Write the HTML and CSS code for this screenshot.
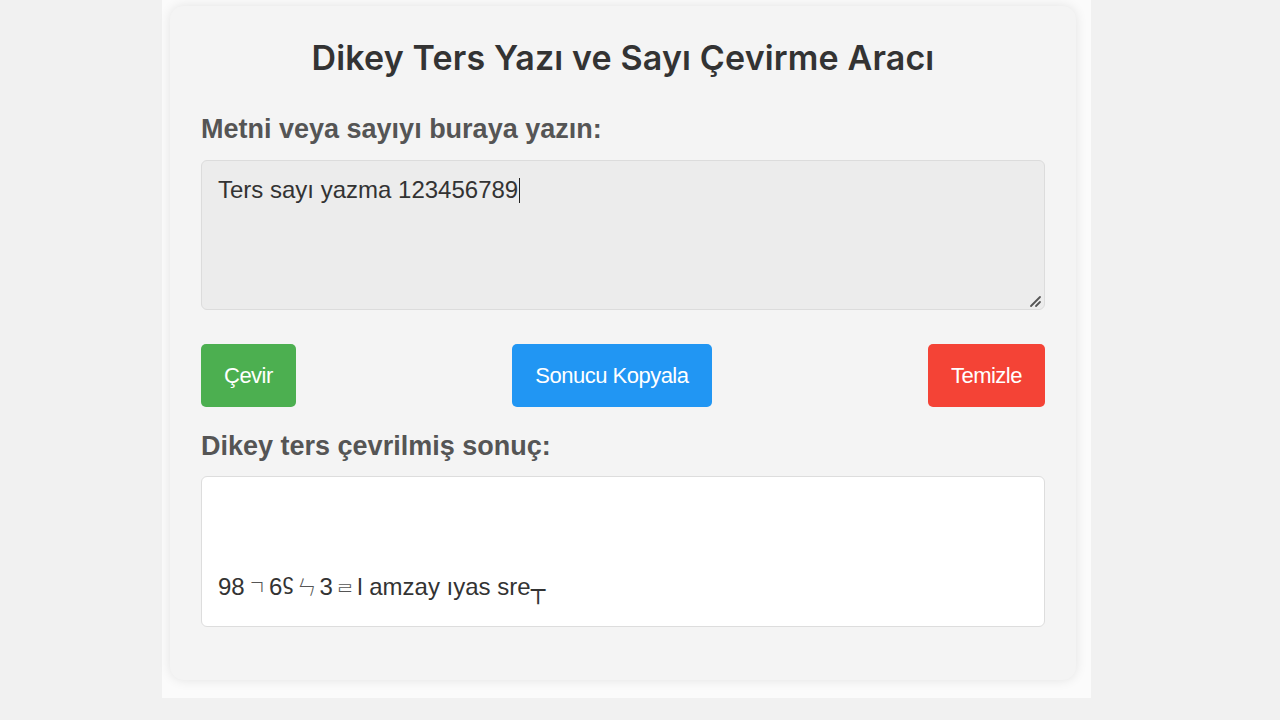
FILE: index.html
```html
<!DOCTYPE html>
<html lang="tr">
<head>
<meta charset="utf-8">
<title>Dikey Ters Yazı ve Sayı Çevirme Aracı</title>
<link rel="stylesheet" href="styles.css">
</head>
<body>
<div class="page">
  <div class="card">
    <h1 class="title">Dikey Ters Yazı ve Sayı Çevirme Aracı</h1>
    <label class="label label-top" for="input">Metni veya sayıyı buraya yazın:</label>
    <div class="input-wrap">
      <div class="input" id="input">Ters sayı yazma 123456789<span class="caret"></span></div>
      <svg class="grip" width="14" height="14" viewBox="0 0 14 14"><path d="M12 3 L3 12 M12 8 L8 12" stroke="#555" stroke-width="1.8" stroke-linecap="round" fill="none"/></svg>
    </div>
    <div class="buttons">
      <button class="btn btn-green">Çevir</button>
      <button class="btn btn-blue">Sonucu Kopyala</button>
      <button class="btn btn-red">Temizle</button>
    </div>
    <div class="label">Dikey ters çevrilmiş sonuç:</div>
    <div class="result"><div class="result-text">98<span class="cjk">ㄱ</span>6<span class="sup">ϛ</span><span class="cjk">ㄣ</span>3<span class="cjk low">ᄅ</span>l amzay ıyas sre<span class="box">┬</span></div></div>
  </div>
</div>
</body>
</html>
```
FILE: styles.css
```css
* { box-sizing: border-box; }
html, body { margin: 0; padding: 0; }
body {
  background: #f1f1f1;
  font-family: "Liberation Sans", Arial, sans-serif;
  height: 720px;
  overflow: hidden;
}
.page {
  margin-left: 162px;
  width: 929px;
  height: 698px;
  background: #fbfbfb;
  padding: 6px 15px 0 8px;
}
.card {
  background: #f4f4f4;
  border-radius: 14px;
  box-shadow: 0 0 12px rgba(0,0,0,0.10);
  padding: 30px 31px 53px 31px;
  display: flex;
  flex-direction: column;
}
.title {
  font-family: Inter, "Open Sans", sans-serif;
  font-weight: 600;
  font-size: 34px;
  color: #333;
  text-align: center;
  margin: 0 0 34px;
  line-height: 44px;
  letter-spacing: 0.15px;
}
.label {
  display: block;
  font-weight: bold;
  font-size: 27px;
  color: #555;
  line-height: 31px;
  margin-bottom: 14px;
}
.label-top { margin-bottom: 15px; }
.input-wrap { position: relative; }
.input {
  height: 150px;
  background: #ececec;
  border: 1px solid #dcdcdc;
  border-radius: 6px;
  padding: 14px 16px;
  font-size: 24px;
  color: #333;
  line-height: 30px;
}
.caret {
  display: inline-block;
  width: 1px;
  height: 25px;
  background: #222;
  vertical-align: -5px;
  margin-left: 1px;
}
.grip { position: absolute; right: 3px; bottom: 2px; }
.buttons {
  display: flex;
  justify-content: space-between;
  margin: 34px 0 24px;
}
.btn {
  font-family: "Liberation Sans", Arial, sans-serif;
  font-size: 22px;
  color: #fff;
  border: none;
  border-radius: 5px;
  height: 63px;
  padding: 0 23px;
  letter-spacing: -0.5px;
}
.btn-green { background: #4caf50; }
.btn-blue { background: #2196f3; }
.btn-red { background: #f44336; }
.result {
  height: 151px;
  background: #fff;
  border: 1px solid #ddd;
  border-radius: 6px;
  padding: 0 16px 19px;
  display: flex;
  flex-direction: column;
  justify-content: flex-end;
}
.result-text {
  font-size: 24px;
  color: #333;
  line-height: 30px;
}
.cjk {
  font-family: "Noto Sans CJK KR", sans-serif;
  font-size: 20px;
  color: #555;
  font-weight: 300;
  margin: 0 3px;
}
.low { vertical-align: -5px; }
.sup { font-size: 22px; vertical-align: 6px; }
.box { font-family: "DejaVu Sans", sans-serif; color: #333; vertical-align: -3px; }
```
